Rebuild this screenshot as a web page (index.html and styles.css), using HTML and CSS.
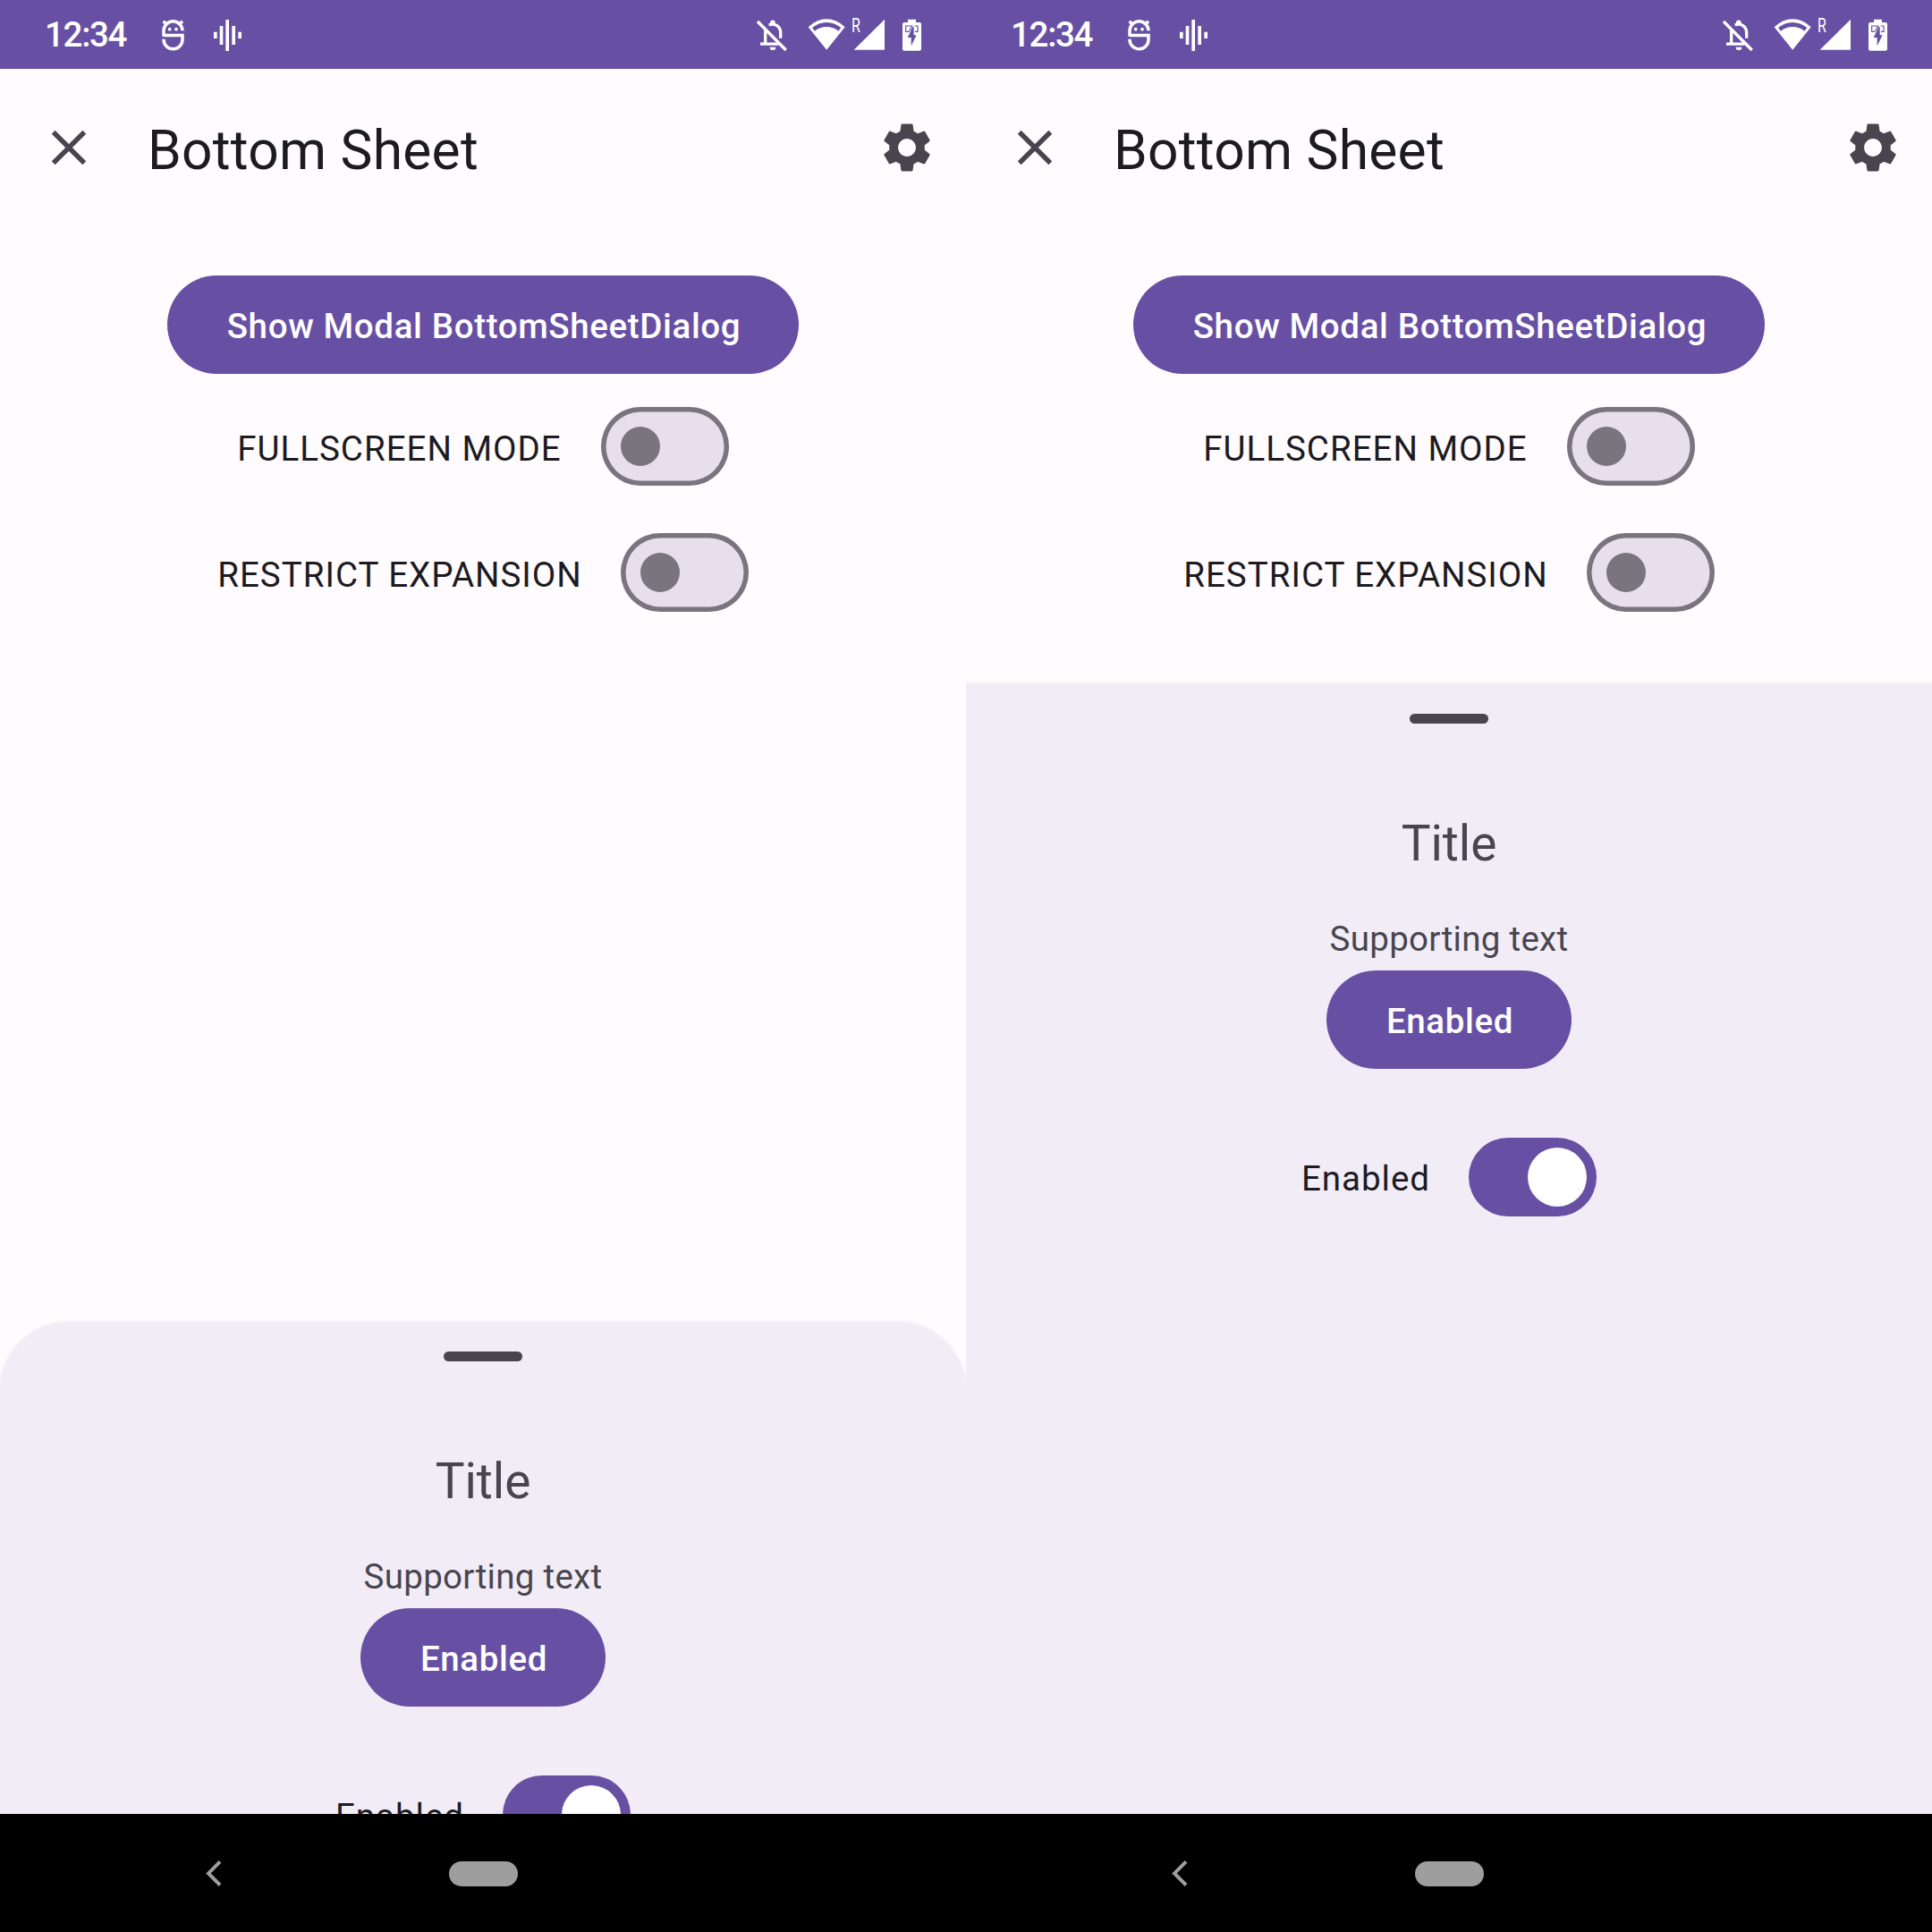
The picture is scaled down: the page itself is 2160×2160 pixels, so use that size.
FILE: index.html
```html
<!DOCTYPE html>
<html lang="en">
<head>
<meta charset="utf-8">
<title>Bottom Sheet</title>
<link rel="stylesheet" href="styles.css">
</head>
<body>
<svg class="defs" aria-hidden="true">
  <symbol id="debug" viewBox="450 0 84 231">
    <g fill="none" stroke="#fff" stroke-width="10.500">
      <path d="M459 122V103a31.500 31.500 0 0 1 63 0M459 118.500H522V133a31.500 31.500 0 0 1-63 0v-2"/>
      <path d="M458 71l12 12M522 71l-12 12"/>
    </g>
    <circle cx="479" cy="98" r="5.500" fill="#fff"/><circle cx="501" cy="98" r="5.500" fill="#fff"/>
  </symbol>
  <symbol id="voice" viewBox="624 0 99 231">
    <path fill="#fff" d="M627 107h11v22h-11zM647 87h11v63h-11zM667 66h11v105h-11zM688 87h11v63h-11zM709 107h11v22h-11z"/>
  </symbol>
  <symbol id="bell-off" viewBox="75 0 108 231">
    <g fill="none" stroke="#fff">
      <path stroke-width="10" d="M107 102V147M90 147.500H152M119 84c20-8 39 5 39 26V128"/>
      <path stroke-width="10" d="M81 72L176 168"/>
    </g>
    <path fill="#fff" d="M123 84V76a8.500 8.500 0 0 1 17 0v8zM122 158h20a10 10 0 0 1-20 0z"/>
  </symbol>
  <symbol id="wifi" viewBox="250 0 129 231">
    <path fill="#fff" fill-rule="evenodd" d="M252 91Q280 64 313.500 64T375 91L313.500 167ZM265 93L274 104Q291 90 313.500 90T353 104L362 93Q340 75 313.500 75T265 93Z"/>
  </symbol>
  <symbol id="signal" viewBox="396 0 114 231">
    <path fill="#fff" d="M507 65V167H404z"/>
    <text class="roaming" transform="translate(396 107) scale(.74 1)">R</text>
  </symbol>
  <symbol id="battery" viewBox="564 0 69 231">
    <path fill="#fff" d="M585 65h27v10h12q6 0 6 6v83q0 6-6 6h-51q-6 0-6-6V81q0-6 6-6h12z"/>
    <path fill="none" stroke="#6750a4" stroke-width="3.500" d="M588 106H578V87H599L589 106M608 87H618V106H609"/>
    <path fill="#6750a4" d="M601 90h4V118h9L596 154V126H584z"/>
  </symbol>
  <symbol id="close" viewBox="0 0 24 24">
    <path d="M19 6.410L17.590 5 12 10.590 6.410 5 5 6.410 10.590 12 5 17.590 6.410 19 12 13.410 17.590 19 19 17.590 13.410 12z"/>
  </symbol>
  <symbol id="settings" viewBox="0 0 24 24">
    <path d="M19.140 12.940c.04-.3.060-.61.060-.94 0-.32-.02-.64-.07-.94l2.030-1.580c.18-.14.230-.41.120-.61l-1.920-3.320c-.12-.22-.37-.29-.59-.22l-2.390.96c-.5-.38-1.030-.7-1.620-.94L14.400 2.810c-.04-.24-.24-.41-.48-.41h-3.840c-.24 0-.43.170-.47.410L9.250 5.350c-.59.240-1.130.570-1.620.94L5.240 5.330c-.22-.08-.47 0-.59.220L2.740 8.870c-.12.210-.08.470.12.610l2.030 1.580c-.05.3-.09.630-.09.940s.02.640.070.940l-2.030 1.580c-.18.140-.23.410-.12.610l1.920 3.320c.12.220.370.290.590.220l2.390-.96c.5.380 1.030.7 1.620.940l.36 2.540c.05.240.240.410.480.410h3.840c.24 0 .44-.17.470-.41l.36-2.540c.59-.24 1.130-.56 1.620-.94l2.390.96c.22.080.470 0 .59-.22l1.920-3.320c.12-.22.070-.47-.12-.61zM12 15.600c-1.980 0-3.600-1.620-3.600-3.600s1.620-3.600 3.600-3.600 3.600 1.620 3.600 3.600-1.620 3.600-3.600 3.600z"/>
  </symbol>
  <symbol id="back" viewBox="0 0 20 30">
    <path d="M17 2.300L4 15.500L17 28.500" fill="none" stroke="#9e9e9e" stroke-width="3.900"/>
  </symbol>
</svg>

<main class="screens">
  <section class="phone">
    <header class="status">
      <span class="clock">12:34</span>
      <svg class="i-debug"><use href="#debug"/></svg>
      <svg class="i-voice"><use href="#voice"/></svg>
      <svg class="i-bell"><use href="#bell-off"/></svg>
      <svg class="i-wifi"><use href="#wifi"/></svg>
      <svg class="i-signal"><use href="#signal"/></svg>
      <svg class="i-battery"><use href="#battery"/></svg>
    </header>
    <div class="appbar">
      <svg class="icon"><use href="#close"/></svg>
      <h1 class="appbar-title">Bottom Sheet</h1>
      <svg class="icon"><use href="#settings"/></svg>
    </div>
    <div class="content">
      <button class="button wide">Show Modal BottomSheetDialog</button>
      <div class="row first"><span class="label">FULLSCREEN MODE</span><span class="switch"></span></div>
      <div class="row second"><span class="label">RESTRICT EXPANSION</span><span class="switch"></span></div>
    </div>
    <div class="sheet collapsed">
      <span class="handle"></span>
      <h2 class="sheet-title">Title</h2>
      <p class="supporting">Supporting text</p>
      <button class="button">Enabled</button>
      <div class="row third"><span class="label">Enabled</span><span class="switch on"></span></div>
    </div>
    <nav class="navbar">
      <svg class="back"><use href="#back"/></svg>
      <span class="home"></span>
    </nav>
  </section>

  <section class="phone">
    <header class="status">
      <span class="clock">12:34</span>
      <svg class="i-debug"><use href="#debug"/></svg>
      <svg class="i-voice"><use href="#voice"/></svg>
      <svg class="i-bell"><use href="#bell-off"/></svg>
      <svg class="i-wifi"><use href="#wifi"/></svg>
      <svg class="i-signal"><use href="#signal"/></svg>
      <svg class="i-battery"><use href="#battery"/></svg>
    </header>
    <div class="appbar">
      <svg class="icon"><use href="#close"/></svg>
      <h1 class="appbar-title">Bottom Sheet</h1>
      <svg class="icon"><use href="#settings"/></svg>
    </div>
    <div class="content short">
      <button class="button wide">Show Modal BottomSheetDialog</button>
      <div class="row first"><span class="label">FULLSCREEN MODE</span><span class="switch"></span></div>
      <div class="row second"><span class="label">RESTRICT EXPANSION</span><span class="switch"></span></div>
    </div>
    <div class="sheet">
      <span class="handle"></span>
      <h2 class="sheet-title">Title</h2>
      <p class="supporting">Supporting text</p>
      <button class="button">Enabled</button>
      <div class="row third"><span class="label">Enabled</span><span class="switch on"></span></div>
    </div>
    <nav class="navbar">
      <svg class="back"><use href="#back"/></svg>
      <span class="home"></span>
    </nav>
  </section>
</main>
</body>
</html>
```
FILE: styles.css
```css
* { box-sizing: border-box; margin: 0; padding: 0; }

body {
  font-family: Roboto, "Liberation Sans", sans-serif;
  font-size: 38.5px;
  color: #1c1b1f;
  background: #fffbff;
}

svg { display: block; flex: none; }
.defs { display: none; }

.screens { display: flex; width: 2160px; height: 2160px; }

.phone {
  display: flex;
  flex-direction: column;
  width: 1080px;
  height: 2160px;
  overflow: hidden;
  background: #fffbff;
}

/* Status bar */
.status {
  display: flex;
  align-items: center;
  flex: none;
  height: 77px;
  padding: 0 49px 0 50px;
  background: #6750a4;
  color: #fff;
}
.status svg { height: 77px; }
.clock { width: 130px; font-size: 38.5px; font-weight: 500; letter-spacing: -1.3px; line-height: 45px; }
.i-debug { width: 28px; }
.i-voice { width: 33px; margin-left: 30px; }
.i-bell { width: 36px; margin-left: auto; }
.i-wifi { width: 43px; margin-left: 22.3px; }
.i-signal { width: 38px; margin-left: 5.7px; }
.i-battery { width: 23px; margin-left: 18px; }
.roaming { font-family: Roboto, sans-serif; font-size: 65px; fill: #fff; }

/* Top app bar */
.appbar {
  display: flex;
  align-items: center;
  flex: none;
  height: 176px;
  padding: 0 33px 0 44px;
}
.icon { width: 66px; height: 66px; fill: #49454f; }
.appbar-title {
  flex: 1;
  margin-left: 55px;
  padding-top: 7px;
  font-size: 60.5px;
  font-weight: 400;
  line-height: 71px;
  letter-spacing: 0.25px;
}

/* Main content */
.content {
  display: flex;
  flex-direction: column;
  align-items: center;
  flex: none;
  height: 1225px;
  padding-top: 55px;
}
.content.short { height: 511px; }

.button {
  flex: none;
  width: 274px;
  height: 110px;
  padding: 3px 0 0 2px;
  border: 0;
  border-radius: 55px;
  background: #6750a4;
  color: #fff;
  font: 500 38.5px/45px Roboto, sans-serif;
  letter-spacing: 0.64px;
}
.button.wide { width: 706px; }

.row { display: flex; align-items: center; justify-content: center; gap: 44px; flex: none; height: 88px; }
.row.first { margin-top: 37px; }
.row.second { margin-top: 53px; gap: 43px; }
.row.third { margin-top: 77px; gap: 43px; }
.label { padding-top: 5px; line-height: 45px; letter-spacing: 1px; }
.row.third .label { padding-top: 3px; }

.switch {
  display: flex;
  align-items: center;
  width: 143px;
  height: 88px;
  padding-left: 22px;
  border-radius: 44px;
  background: #e7e0ec;
  box-shadow: inset 0 0 0 5.5px #79747e;
}
.switch::before {
  content: "";
  width: 44px;
  height: 44px;
  border-radius: 50%;
  background: #79747e;
}
.switch.on { padding: 0 11px 0 0; justify-content: flex-end; box-shadow: none; background: #6750a4; }
.switch.on::before { width: 66px; height: 66px; background: #fff; }

/* Bottom sheet */
.sheet {
  display: flex;
  flex-direction: column;
  align-items: center;
  flex: 1;
  min-height: 0;
  overflow: hidden;
  padding-top: 34px;
  background: #f1ecf6;
  box-shadow: 0 0 4px rgba(0, 0, 0, 0.08);
}
.sheet.collapsed { padding-top: 33px; border-radius: 77px 77px 0 0; }
.handle { flex: none; width: 88px; height: 11px; border-radius: 5.5px; background: #49454f; }
.sheet-title {
  margin-top: 102px;
  font-size: 55px;
  font-weight: 400;
  line-height: 64px;
  color: #49454f;
}
.supporting { margin: 52px 0 13px; line-height: 45px; letter-spacing: 0.3px; color: #49454f; }

/* System navigation */
.navbar { display: flex; align-items: center; flex: none; height: 132px; padding-left: 229px; background: #000; }
.back { width: 20px; height: 30px; }
.home { width: 77px; height: 28px; margin: 1px 0 0 253px; border-radius: 14px; background: #9e9e9e; }
```
